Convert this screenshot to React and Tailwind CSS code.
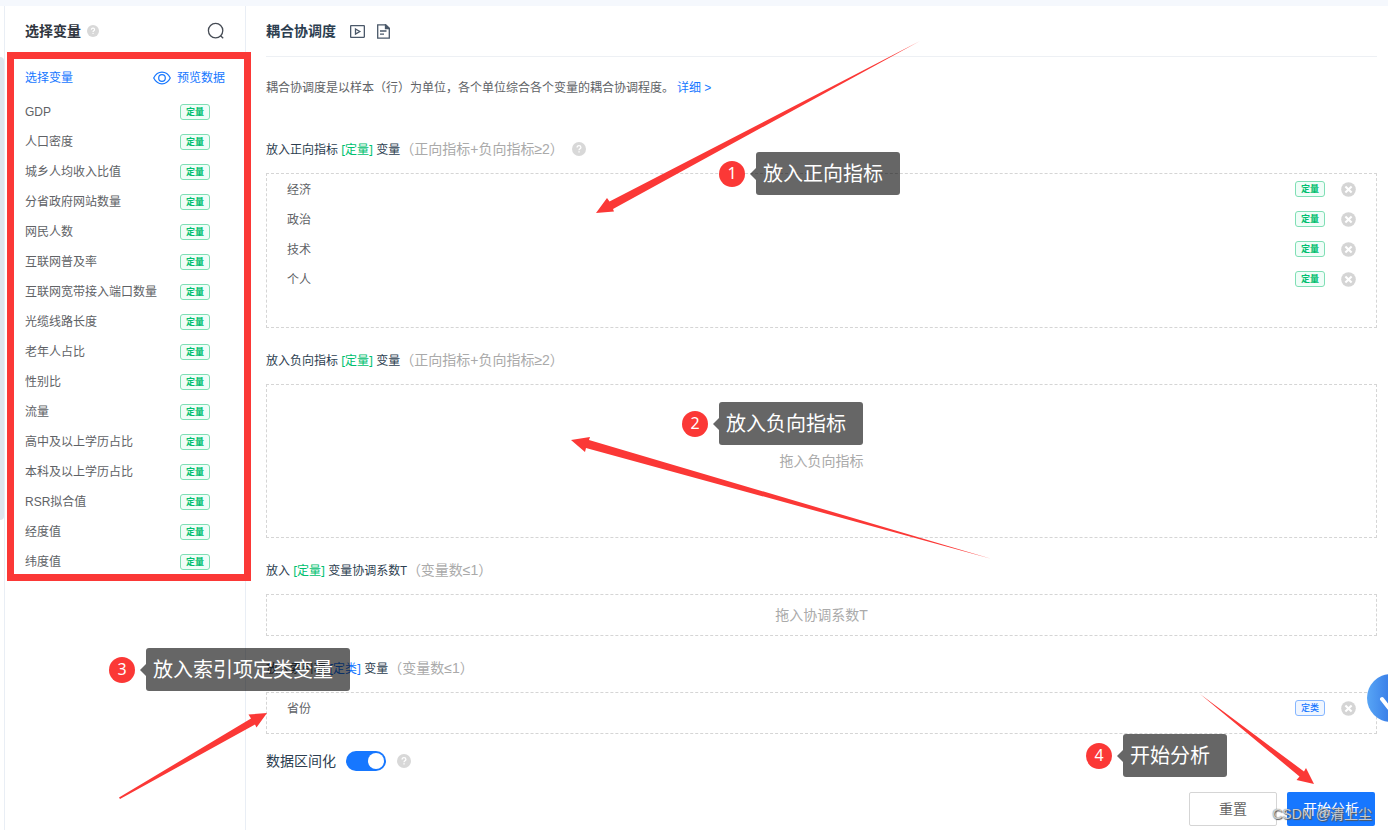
import React from "react";

const RED = "#fb3836";

const variables = [
  "GDP",
  "人口密度",
  "城乡人均收入比值",
  "分省政府网站数量",
  "网民人数",
  "互联网普及率",
  "互联网宽带接入端口数量",
  "光缆线路长度",
  "老年人占比",
  "性别比",
  "流量",
  "高中及以上学历占比",
  "本科及以上学历占比",
  "RSR拟合值",
  "经度值",
  "纬度值",
];

function Tag({ kind = "定量" }) {
  const tone =
    kind === "定量"
      ? "border-[#7fdfb5] bg-[#f0fdf8] text-[#00bf6f] font-bold"
      : "border-[#85b6ff] bg-[#f0f6ff] text-[#1677ff] font-medium";
  return (
    <span
      className={`flex h-4 w-[30px] shrink-0 items-center justify-center rounded-[3px] border text-[9px] leading-none ${tone}`}
    >
      {kind}
    </span>
  );
}

function Help({ small }) {
  return (
    <svg viewBox="0 0 14 14" className={small ? "size-3 shrink-0" : "size-3.5 shrink-0"} aria-hidden="true">
      <circle cx="7" cy="7" r="7" fill="#d8d8d8" />
      <path
        d="M5.1 5.6c0-1.1.8-1.9 1.9-1.9s1.9.7 1.9 1.7c0 1.3-1.9 1.4-1.9 2.8"
        fill="none"
        stroke="#fff"
        strokeWidth="1.3"
      />
      <rect x="6.4" y="9.2" width="1.3" height="1.3" fill="#fff" />
    </svg>
  );
}

function RemoveButton({ name }) {
  return (
    <button type="button" aria-label={`移除${name}`} className="shrink-0">
      <svg viewBox="0 0 15 15" className="block size-[15px]">
        <circle cx="7.5" cy="7.5" r="7.3" fill="#d5d5d5" />
        <path d="M4.4 4.4l6.2 6.2M10.600 4.400l-6.200 6.200" stroke="#fff" strokeWidth="2.1" />
      </svg>
    </button>
  );
}

function SectionLabel({ before, kind, after, hint, help }) {
  return (
    <h2 className="flex h-14 items-center pt-2 text-xs text-[#2c3e50]">
      <span className="pt-0.5 font-['Noto_Sans','Noto_Sans_CJK_SC',sans-serif]">
        {before} <span className={kind === "定量" ? "text-[#00bf6f]" : "text-[#1677ff]"}>[{kind}]</span> {after}
      </span>
      <span className="text-sm text-[#aaaaaa]">{hint}</span>
      {help && (
        <span className="ml-2">
          <Help />
        </span>
      )}
    </h2>
  );
}

function DropZone({ items, kind, placeholder, size }) {
  return (
    <div className={`flex flex-col border border-dashed border-[#d5d5d5] ${size}`}>
      {items ? (
        <ul>
          {items.map((name) => (
            <li key={name} className="flex h-[30px] items-center px-5 text-xs text-[#606266]">
              <span className="flex-1 pt-0.5">{name}</span>
              <Tag kind={kind} />
              <span className="ml-4 flex">
                <RemoveButton name={name} />
              </span>
            </li>
          ))}
        </ul>
      ) : (
        <p className="m-auto text-sm text-[#aaaaaa]">{placeholder}</p>
      )}
    </div>
  );
}

function Callout({ number, text, place }) {
  return (
    <div className={`absolute flex items-center font-['Noto_Sans','Noto_Sans_CJK_SC',sans-serif] ${place}`}>
      <span className="mr-[5px] flex size-[26px] items-center justify-center rounded-full bg-[#fb3836] pb-0.5 text-base leading-none text-white">
        {number}
      </span>
      <svg viewBox="0 0 6 12" className="h-3 w-1.5">
        <path d="M6 0v12L0 6z" fill="#000" fillOpacity=".6" />
      </svg>
      <span className="flex h-[43px] items-center whitespace-nowrap rounded-[3px] bg-black/60 pl-[7px] pr-[17px] text-xl text-white">
        {text}
      </span>
    </div>
  );
}

function Sidebar() {
  return (
    <aside className="relative w-[242px] shrink-0 border-x border-[#e9eef5]">
      <div className="flex h-[50px] items-center px-5">
        <h2 className="text-sm font-bold text-[#303640]">选择变量</h2>
        <span className="ml-1.5">
          <Help small />
        </span>
        <button type="button" aria-label="搜索" className="ml-auto">
          <svg viewBox="0 0 18 18" className="block size-[18px]" fill="none" stroke="#454b54" strokeWidth="1.3">
            <circle cx="8.600" cy="8.600" r="7.200" />
            <path d="M13.600 13.800l2.600 2.400" />
          </svg>
        </button>
      </div>
      <div className="flex h-[41px] items-center justify-between px-5 pt-0.5 text-xs text-[#1677ff]">
        <button type="button">选择变量</button>
        <button type="button" className="flex items-center gap-1.5">
          <svg viewBox="0 0 18 14" className="h-3.5 w-[18px]" fill="none" stroke="#1677ff" strokeWidth="1.2">
            <path d="M.7 7C2.6 3.3 5.5 1.2 9 1.2S15.400 3.300 17.300 7C15.400 10.700 12.500 12.800 9 12.800S2.600 10.700.7 7z" />
            <circle cx="9" cy="7" r="3.300" />
          </svg>
          预览数据
        </button>
      </div>
      <ul>
        {variables.map((name) => (
          <li key={name} className="flex h-[30px] items-center justify-between pl-5 pr-[35px] text-xs text-[#606266]">
            <span>{name}</span>
            <Tag />
          </li>
        ))}
      </ul>
      <div className="pointer-events-none absolute -right-1.5 left-0.5 top-[46px] h-[529px] border-[7px] border-[#fb3836]" />
    </aside>
  );
}

export default function App() {
  return (
    <div className="relative min-h-screen overflow-hidden bg-white pt-1.5 font-['Liberation_Sans','Noto_Sans_CJK_SC',sans-serif]">
      <div className="absolute inset-x-0 top-0 h-1.5 bg-[#f5f8fd]" />
      <div className="flex min-h-[824px]">
        <div className="w-1 shrink-0 pt-[51px]">
          <div className="h-[463px] rounded-r-sm bg-[#dde5ed]" />
        </div>
        <Sidebar />
        <main className="min-w-0 flex-1 pl-5 pr-[11px]">
          <header className="flex h-[51px] items-center border-b border-[#edf0f4]">
            <h1 className="text-sm font-bold text-[#2c3e50]">耦合协调度</h1>
            <button type="button" aria-label="视频" className="ml-3.5">
              <svg viewBox="0 0 15 13" className="block h-[13px] w-[15px]" fill="none" stroke="#4a5869" strokeWidth="1.3">
                <rect x=".65" y=".65" width="13.700" height="11.700" rx=".5" />
                <path d="M5.500 4l4.300 2.500-4.300 2.500z" />
              </svg>
            </button>
            <button type="button" aria-label="文档" className="ml-3">
              <svg viewBox="0 0 13 15" className="block h-[15px] w-[13px]" fill="none" stroke="#4a5869" strokeWidth="1.3">
                <path d="M.7.9h8.100l3.500 3.400v9.800H.7z" />
                <path d="M8.500 1v3.500h3.700z" fill="#4a5869" />
                <path d="M3 7h6.500M3 10.200h4" />
              </svg>
            </button>
          </header>

          <p className="flex h-[60px] items-center pt-0.5 text-xs text-[#606266]">
            耦合协调度是以样本（行）为单位，各个单位综合各个变量的耦合协调程度。
            <a href="#detail" className="ml-[3px] text-[#1677ff]">
              详细 &gt;
            </a>
          </p>

          <SectionLabel before="放入正向指标" kind="定量" after="变量" hint="（正向指标+负向指标≥2）" help />
          <DropZone items={["经济", "政治", "技术", "个人"]} kind="定量" size="min-h-[155px]" />

          <SectionLabel before="放入负向指标" kind="定量" after="变量" hint="（正向指标+负向指标≥2）" />
          <DropZone placeholder="拖入负向指标" size="min-h-[154px]" />

          <SectionLabel before="放入" kind="定量" after="变量协调系数T" hint="（变量数≤1）" />
          <DropZone placeholder="拖入协调系数T" size="min-h-[42px]" />

          <SectionLabel before="放入索引项" kind="定类" after="变量" hint="（变量数≤1）" />
          <DropZone items={["省份"]} kind="定类" size="min-h-[42px]" />

          <div className="flex h-[54px] items-center text-sm text-[#2c3e50]">
            <label htmlFor="interval">数据区间化</label>
            <input
              id="interval"
              type="checkbox"
              role="switch"
              defaultChecked
              className="ml-2.5 mr-[11px] flex h-5 w-10 appearance-none items-center rounded-full bg-[#c0c4cc] px-0.5 before:size-4 before:rounded-full before:bg-white checked:justify-end checked:bg-[#1677ff]"
            />
            <Help />
          </div>

          <div className="flex justify-end gap-2.5 pr-0.5 pt-1">
            <button type="button" className="h-[34px] w-[88px] rounded-[2px] border border-[#d5d5d5] bg-white text-sm text-[#666666]">
              重置
            </button>
            <button type="button" className="h-[34px] w-[88px] rounded-[2px] bg-[#1677ff] text-sm text-white">
              开始分析
            </button>
          </div>
        </main>
      </div>

      <button
        type="button"
        aria-label="展开"
        className="absolute -right-[27px] top-[674px] size-12 rounded-full bg-linear-to-r from-[#58a5f5] to-[#2050d8]"
      >
        <svg viewBox="0 0 48 48" className="size-12" fill="none" stroke="#fff" strokeWidth="4" strokeLinecap="round" strokeLinejoin="round">
          <path d="M15 25l7 9 12-16" />
        </svg>
      </button>

      <svg viewBox="0 0 1388 830" className="pointer-events-none absolute left-0 top-0 h-[830px] w-[1388px]" fill={RED}>
        <path d="M920 41L609.500 201.500 607 198 596 213 614 211.500 613 209z" />
        <path d="M992 559L589 440 590 437 571 440 585 452 586 448z" />
        <path d="M119 797.500L251 718.500 248.500 714.500 267 713 256.500 727.500 255 724.500 120 799z" />
        <path d="M1200 694L1304 771.500 1306 768 1314 784 1296.500 780 1299.500 776.500z" />
      </svg>

      <Callout number="1" text="放入正向指标" place="left-[719px] top-[152px]" />
      <Callout number="2" text="放入负向指标" place="left-[682px] top-[402px]" />
      <Callout number="3" text="放入索引项定类变量" place="left-[109px] top-[648px]" />
      <Callout number="4" text="开始分析" place="left-[1086px] top-[734px]" />

      <span className="pointer-events-none absolute bottom-1.5 right-4 whitespace-nowrap text-sm text-white/70 [text-shadow:0_0_1px_#555,1px_1px_1px_#555]">
        CSDN @清上尘
      </span>
    </div>
  );
}
